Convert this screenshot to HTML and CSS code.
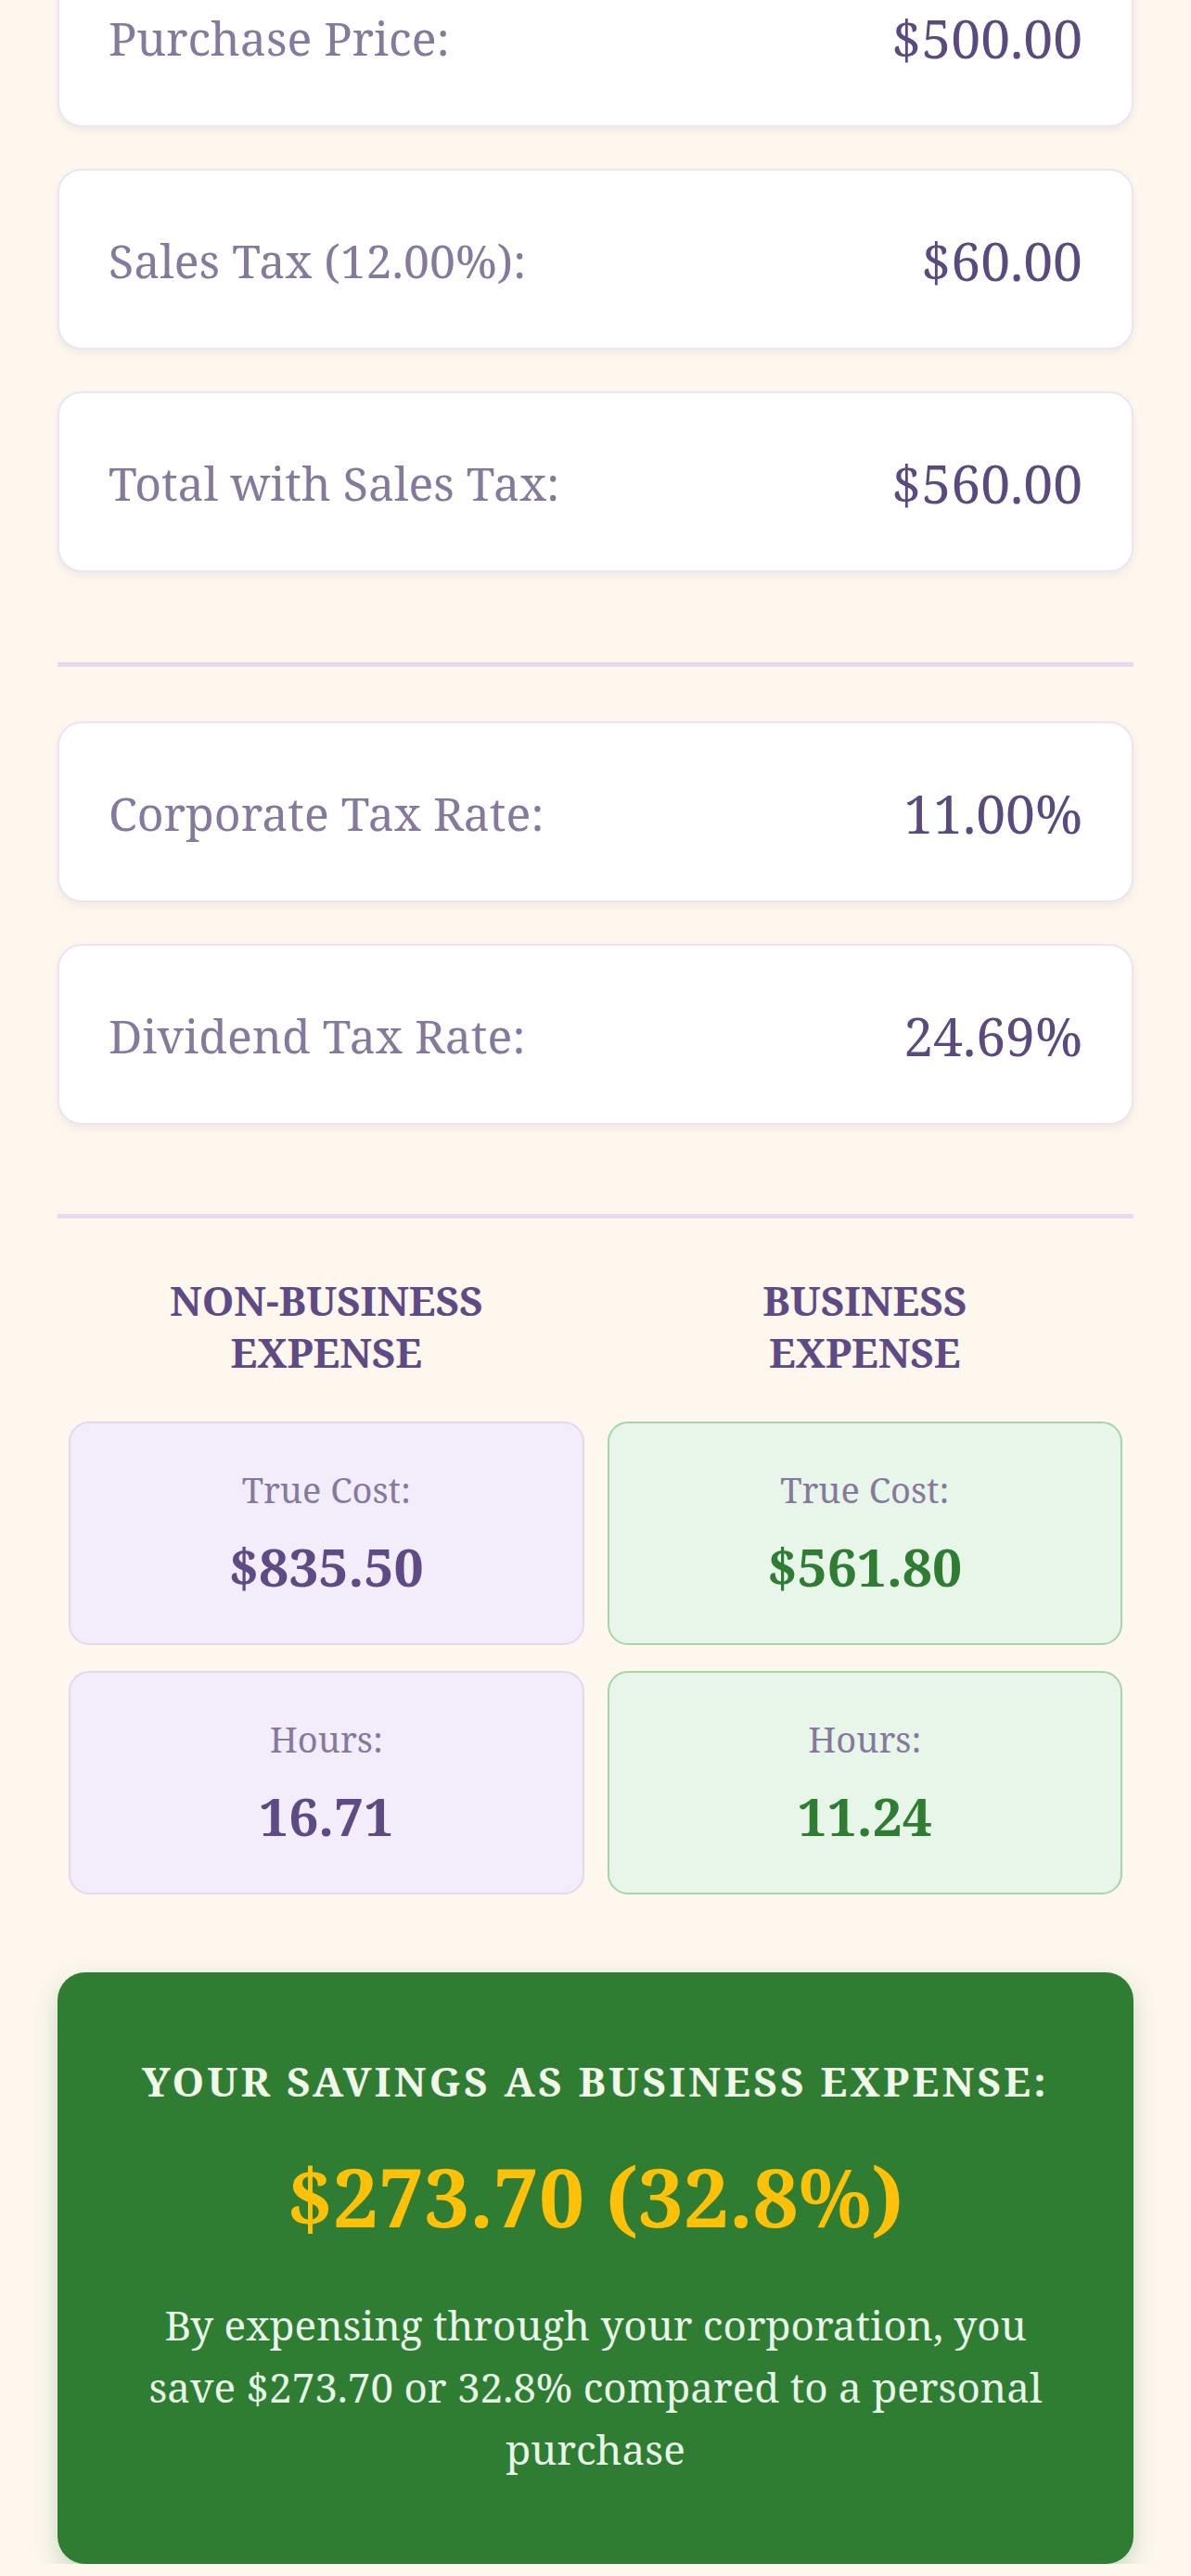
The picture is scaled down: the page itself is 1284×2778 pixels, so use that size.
FILE: index.html
```html
<!DOCTYPE html>
<html lang="en">
<head>
    <meta charset="UTF-8">
    <meta name="viewport" content="width=device-width, initial-scale=1.0">
    <title>Business Expense Calculator</title>
    <link rel="stylesheet" href="styles.css">
</head>
<body>

    <div class="calculator">
        <!-- Purchase -->
        <div class="rows">
            <div class="row"><span class="label">Purchase Price:</span><span class="value">$500.00</span></div>
            <div class="row"><span class="label">Sales Tax (12.00%):</span><span class="value">$60.00</span></div>
            <div class="row"><span class="label">Total with Sales Tax:</span><span class="value">$560.00</span></div>
        </div>

        <div class="divider"></div>

        <!-- Tax rates -->
        <div class="rows">
            <div class="row"><span class="label">Corporate Tax Rate:</span><span class="value">11.00%</span></div>
            <div class="row"><span class="label">Dividend Tax Rate:</span><span class="value">24.69%</span></div>
        </div>

        <div class="divider divider-bottom"></div>

        <!-- Comparison -->
        <div class="compare">
            <h3 class="compare-title">NON-BUSINESS EXPENSE</h3>
            <h3 class="compare-title">BUSINESS EXPENSE</h3>

            <div class="result personal">
                <p class="result-label">True Cost:</p>
                <p class="result-value">$835.50</p>
            </div>
            <div class="result business">
                <p class="result-label">True Cost:</p>
                <p class="result-value">$561.80</p>
            </div>

            <div class="result personal">
                <p class="result-label">Hours:</p>
                <p class="result-value">16.71</p>
            </div>
            <div class="result business">
                <p class="result-label">Hours:</p>
                <p class="result-value">11.24</p>
            </div>
        </div>

        <!-- Savings -->
        <div class="savings">
            <h3>YOUR SAVINGS AS BUSINESS EXPENSE:</h3>
            <div class="savings-amount">$273.70 (32.8%)</div>
            <p>By expensing through your corporation, you save $273.70 or 32.8% compared to a personal purchase</p>
        </div>
    </div>

</body>
</html>
```
FILE: styles.css
```css
body {
    margin: 0;
    padding: 0;
    font-family: "Noto Serif", "DejaVu Serif", serif;
    background-color: #fdf7ee;
    color: #5e4a84;
    overflow: hidden;
}
.calculator {
    margin-top: -58px;
    padding: 0 62px;
}
.rows {
    display: flex;
    flex-direction: column;
    gap: 45px;
}
.row {
    display: flex;
    justify-content: space-between;
    align-items: center;
    padding: 58px 53px 55px;
    background: #fff;
    border: 2px solid #ece4f1;
    border-radius: 26px;
    box-shadow: 0 4px 8px rgba(94, 74, 132, 0.08);
}
.label {
    font-size: 50px;
    color: #85799d;
}
.value {
    font-size: 57px;
    color: #5b4a80;
}
.divider {
    height: 5px;
    background: #e6daef;
    margin: 97px 0 59px;
}
.divider-bottom {
    margin: 96px 0 60px;
}
.compare {
    display: grid;
    grid-template-columns: 1fr 1fr;
    gap: 28px 25px;
    padding: 0 12px;
}
.compare-title {
    margin: 0 0 19px;
    padding: 0 60px;
    font-size: 44px;
    line-height: 56px;
    font-weight: bold;
    text-align: center;
    color: #5e4a84;
}
.result {
    padding: 45px 20px 44px;
    border: 2px solid;
    border-radius: 22px;
    text-align: center;
}
.result p {
    margin: 0;
}
.result .result-label {
    font-size: 38px;
    color: #85799d;
    margin-bottom: 18px;
}
.result-value {
    font-size: 57px;
    font-weight: bold;
}
.personal {
    background: #f3edfb;
    border-color: #e3d8ee;
}
.personal .result-value {
    color: #5e4a84;
}
.business {
    background: #e8f5e9;
    border-color: #a5d6a7;
}
.business .result-value {
    color: #2e7d32;
}
.savings {
    margin-top: 84px;
    padding: 87px 70px 90px;
    background: #2e7d32;
    border-radius: 30px;
    text-align: center;
    box-shadow: 0 10px 24px rgba(46, 125, 50, 0.25);
}
.savings h3 {
    margin: 0;
    font-size: 44px;
    font-weight: bold;
    letter-spacing: 3.3px;
    color: #f1f8e9;
}
.savings-amount {
    margin-top: 35px;
    font-size: 87px;
    font-weight: bold;
    color: #ffc107;
}
.savings p {
    margin: 47px 0 0;
    font-size: 44px;
    line-height: 67px;
    color: #e8f5e9;
}
```
